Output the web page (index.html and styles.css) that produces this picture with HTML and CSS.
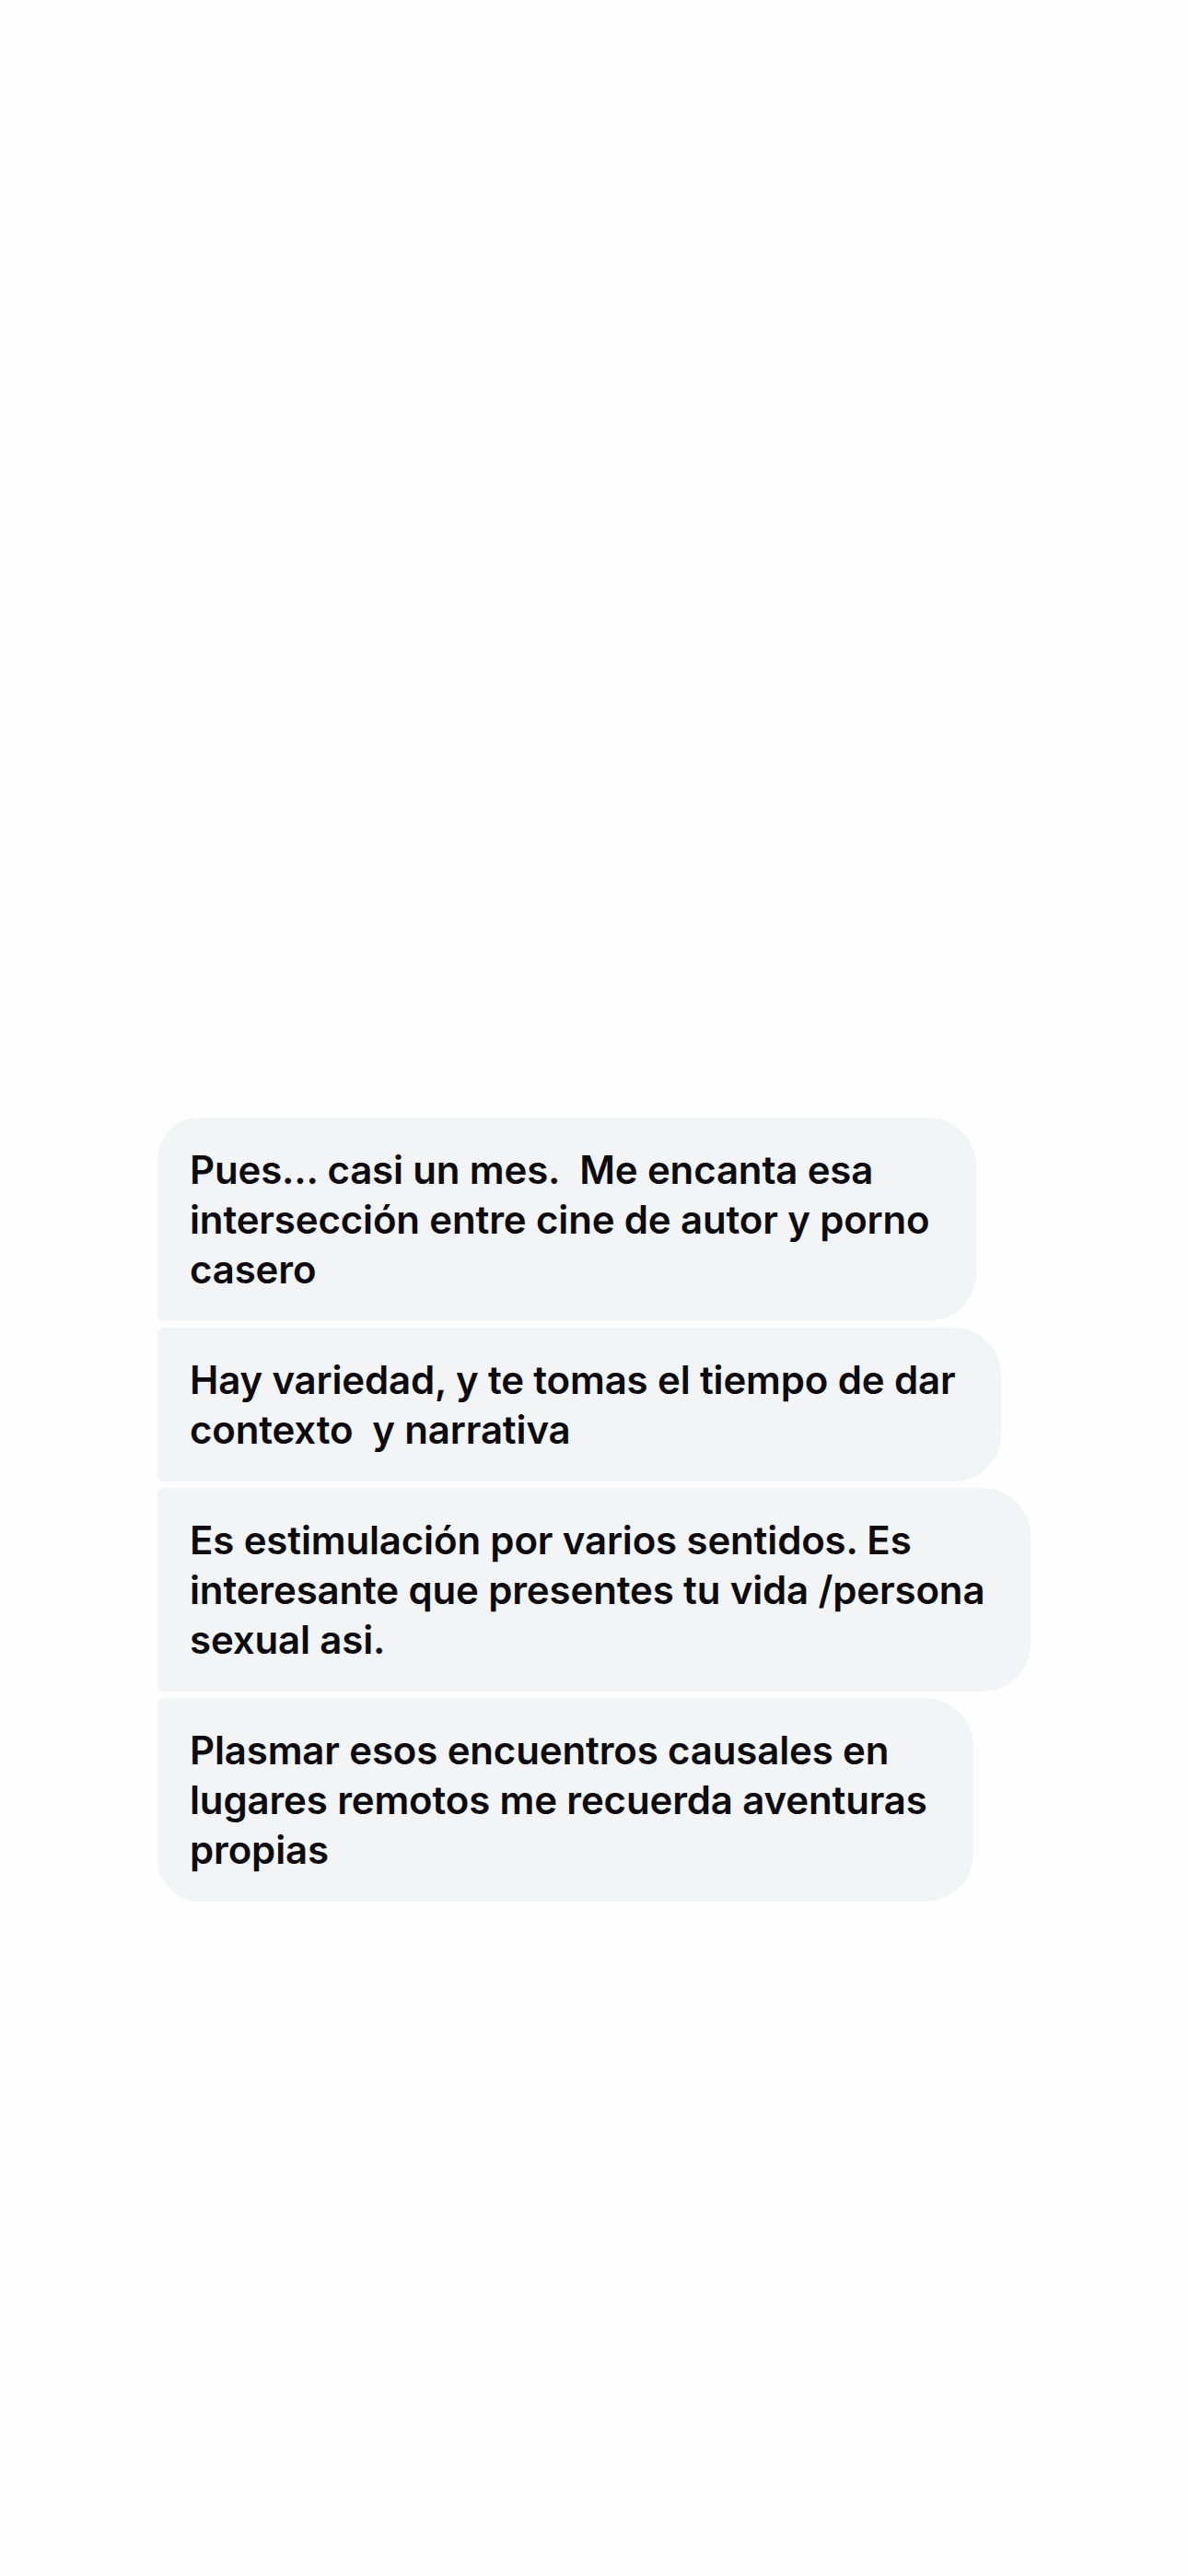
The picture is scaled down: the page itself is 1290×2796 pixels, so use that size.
FILE: index.html
```html
<!DOCTYPE html>
<html lang="es">
<head>
<meta charset="utf-8">
<title>Mensajes</title>
<link rel="stylesheet" href="styles.css">
</head>
<body>
<main class="screen">
  <section class="thread">
    <div class="bubble first">Pues... casi un mes.&nbsp; Me encanta esa<br>intersección entre cine de autor y porno<br>casero</div>
    <div class="bubble">Hay variedad, y te tomas el tiempo de dar<br>contexto&nbsp; y narrativa</div>
    <div class="bubble">Es estimulación por varios sentidos. Es<br>interesante que presentes tu vida /persona<br>sexual asi.</div>
    <div class="bubble last">Plasmar esos encuentros causales en<br>lugares remotos me recuerda aventuras<br>propias</div>
  </section>
</main>
</body>
</html>
```
FILE: styles.css
```css
html, body {
  margin: 0;
  padding: 0;
  background: #fefefe;
}

.screen {
  width: 1290px;
  height: 2796px;
  overflow: hidden;
  box-sizing: border-box;
  padding-top: 1213px;
  padding-left: 171px;
}

.thread {
  display: flex;
  flex-direction: column;
  align-items: flex-start;
  gap: 7px;
}

.bubble {
  width: max-content;
  background: #f3f4f6;
  color: #0b0b10;
  font-family: Inter, "Noto Sans", sans-serif;
  font-weight: 600;
  font-size: 42px;
  line-height: 54px;
  letter-spacing: -0.15px;
  padding: 30px 50px 29px 35px;
  border-radius: 6px 52px 52px 6px;
}

.bubble.first {
  border-top-left-radius: 46px;
}

.bubble.last {
  border-bottom-left-radius: 46px;
}
```
